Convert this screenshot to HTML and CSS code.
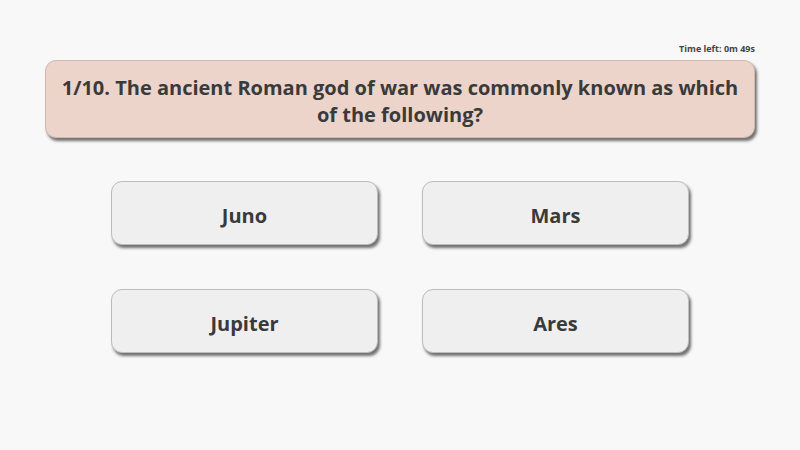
FILE: index.html
```html
<!DOCTYPE html>
<html>
<head>
<meta charset="utf-8">
<link rel="stylesheet" href="styles.css">
</head>
<body>
<div class="page">
  <div class="timer">Time left: 0m 49s</div>
  <div class="question">1/10. The ancient Roman god of war was commonly known as which of the following?</div>
  <div class="answers">
    <button class="answer">Juno</button>
    <button class="answer">Mars</button>
    <button class="answer">Jupiter</button>
    <button class="answer">Ares</button>
  </div>
</div>
</body>
</html>
```
FILE: styles.css
```css
html, body {
  margin: 0;
  padding: 0;
  background: #f8f8f8;
  font-family: "Open Sans", "Noto Sans", "Liberation Sans", sans-serif;
  color: #3a3a3a;
}
.page {
  width: 800px;
  height: 450px;
  display: flex;
  flex-direction: column;
  align-items: center;
}
.timer {
  align-self: flex-end;
  margin: 43px 45px 0 0;
  font-size: 9px;
  font-weight: 700;
  line-height: 12px;
  color: #444;
}
.question {
  box-sizing: border-box;
  width: 710px;
  height: 78px;
  margin-top: 5px;
  padding: 4px 10px 0;
  background: #ecd4cb;
  border: 1px solid #d2b9b0;
  border-radius: 11px;
  box-shadow: 2px 3px 3px rgba(0, 0, 0, 0.55);
  display: flex;
  align-items: center;
  justify-content: center;
  text-align: center;
  font-size: 20px;
  font-weight: 700;
  line-height: 27px;
  letter-spacing: 0;
}
.answers {
  margin-top: 43px;
  display: grid;
  grid-template-columns: 267px 267px;
  column-gap: 44px;
  row-gap: 44px;
}
.answer {
  box-sizing: border-box;
  height: 64px;
  background: #efefef;
  border: 1px solid #bdbdbd;
  border-radius: 11px;
  box-shadow: 2px 3px 3px rgba(0, 0, 0, 0.55);
  font-family: inherit;
  font-size: 20px;
  font-weight: 700;
  color: #3a3a3a;
  padding: 4px 0 0;
}
```
